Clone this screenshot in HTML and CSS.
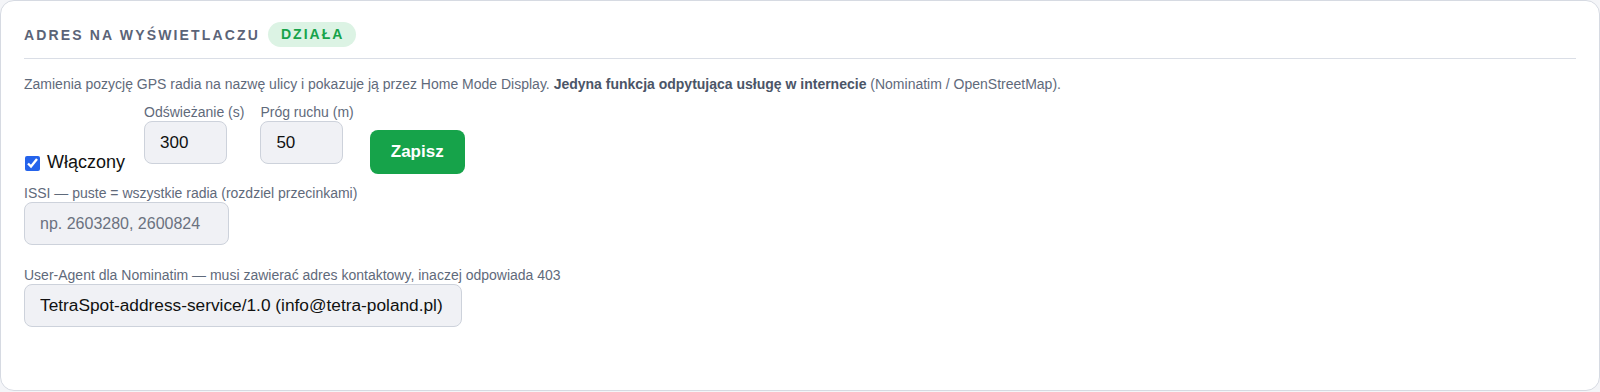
FILE: index.html
```html
<!DOCTYPE html>
<html lang="pl">
  <head>
    <meta charset="UTF-8" />
    <meta name="viewport" content="width=device-width, initial-scale=1.0" />
    <title>Adres na wyświetlaczu</title>
    <link rel="stylesheet" href="styles.css">
  </head>
  <body>
    <section class="karta">
      <div class="naglowek">
        <h2>Adres na wyświetlaczu</h2>
        <span class="odznaka">Działa</span>
      </div>
      <p class="opis">
        Zamienia pozycję GPS radia na nazwę ulicy i pokazuje ją przez Home Mode Display.
        <b>Jedyna funkcja odpytująca usługę w internecie</b> (Nominatim / OpenStreetMap).
      </p>
      <div class="wiersz">
        <label class="wlacz">
          <input type="checkbox" checked />
          Włączony
        </label>
        <div class="pole">
          <label for="odswiez">Odświeżanie (s)</label>
          <input type="text" id="odswiez" class="krotkie" value="300" />
        </div>
        <div class="pole">
          <label for="prog">Próg ruchu (m)</label>
          <input type="text" id="prog" class="krotkie" value="50" />
        </div>
        <button class="zapisz">Zapisz</button>
      </div>
      <div class="pole issi">
        <label for="issi">ISSI — puste = wszystkie radia (rozdziel przecinkami)</label>
        <input type="text" id="issi" class="issi-pole" placeholder="np. 2603280, 2600824" />
      </div>
      <div class="pole">
        <label for="ua">User-Agent dla Nominatim — musi zawierać adres kontaktowy, inaczej odpowiada 403</label>
        <input type="text" id="ua" class="ua-pole" value="TetraSpot-address-service/1.0 (info@tetra-poland.pl)" />
      </div>
    </section>
  </body>
</html>
```

FILE: styles.css
```css
* {
  margin: 0;
  padding: 0;
  box-sizing: border-box;
}

body {
  font-family: "Liberation Sans", Arial, sans-serif;
  background-color: #f4f5f8;
  height: 100vh;
  overflow: hidden;
}

/* karta ustawien */
.karta {
  height: 391px;
  background-color: #fff;
  border: 1px solid #d6dae2;
  border-radius: 14px;
  padding: 21px 23px;
}

.naglowek {
  display: flex;
  align-items: center;
  gap: 8px;
  padding-bottom: 11px;
  border-bottom: 1px solid #dadee6;
}

.naglowek h2 {
  font-size: 14px;
  font-weight: bold;
  text-transform: uppercase;
  letter-spacing: 2.15px;
  color: #5b6478;
}

.odznaka {
  display: inline-block;
  height: 25px;
  line-height: 25px;
  padding: 0 12px 0 13px;
  border-radius: 13px;
  background-color: #dcf3e4;
  color: #16a34a;
  font-size: 14px;
  font-weight: bold;
  text-transform: uppercase;
  letter-spacing: 2px;
}

.opis {
  margin: 17px 0 12px;
  font-size: 14px;
  color: #5f6a7b;
}

.opis b {
  color: #4b5567;
}

.wiersz {
  display: flex;
  align-items: flex-end;
  gap: 16px;
  margin-bottom: 11px;
}

.wlacz {
  display: flex;
  align-items: center;
  font-size: 18px;
  color: #111;
  padding-bottom: 1px;
  margin-right: 3px;
}

.wlacz input {
  width: 15px;
  height: 15px;
  margin: 2px 7px 0 1px;
  accent-color: #2563eb;
}

.pole {
  display: flex;
  flex-direction: column;
  align-items: flex-start;
}

.wiersz .pole {
  padding-bottom: 10px;
}

.pole label {
  font-size: 14px;
  color: #5f6a7b;
  margin-bottom: 1px;
}

.pole input {
  height: 43px;
  padding: 0 15px;
  font-family: inherit;
  font-size: 17px;
  color: #111;
  background-color: #f0f1f5;
  border: 1px solid #cdd2db;
  border-radius: 8px;
  outline: none;
}

.pole input::placeholder {
  color: #6b7280;
}

.krotkie {
  width: 83px;
}

.issi {
  margin-bottom: 22px;
}

.pole .issi-pole {
  width: 205px;
  font-size: 16px;
}

.pole .ua-pole {
  width: 438px;
  padding: 0 12px 0 15px;
  font-size: 17.3px;
}

.zapisz {
  height: 44px;
  padding: 0 21px;
  font-family: inherit;
  font-size: 17px;
  font-weight: bold;
  color: #fff;
  background-color: #16a34a;
  border: none;
  border-radius: 8px;
  cursor: pointer;
}
```
